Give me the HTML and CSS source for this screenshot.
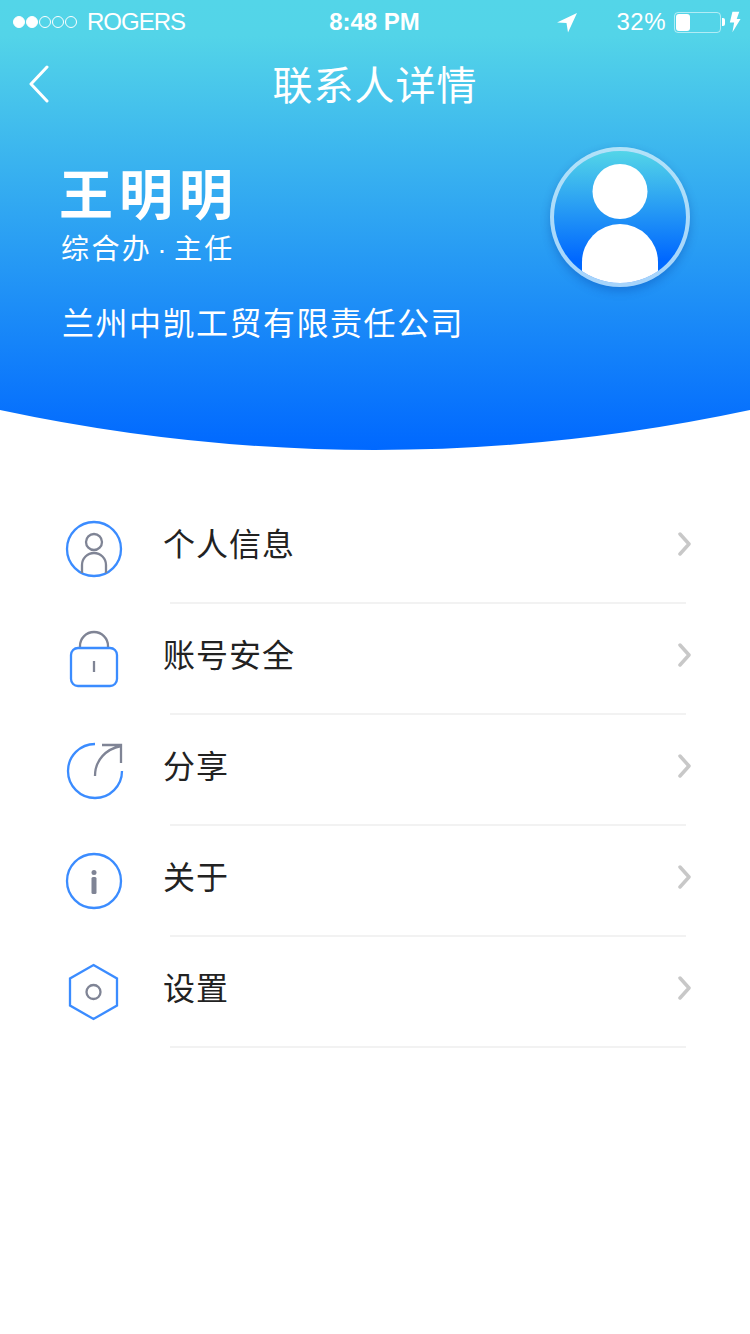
FILE: index.html
```html
<!DOCTYPE html>
<html lang="zh-CN">
<head>
  <meta charset="UTF-8">
  <meta name="viewport" content="width=device-width, initial-scale=1.0">
  <title>联系人详情</title>
  <link rel="stylesheet" href="styles.css">
</head>
<body>
  <header class="hero">
    <div class="status-bar">
      <div class="status-left">
        <span class="signal">
          <i class="dot on"></i><i class="dot on"></i><i class="dot"></i><i class="dot"></i><i class="dot"></i>
        </span>
        <span class="carrier">ROGERS</span>
      </div>
      <span class="clock">8:48 PM</span>
      <div class="status-right">
        <svg class="locate" width="22" height="22" viewBox="0 0 22 22"><path d="M21 2 1 11.500 10.500 12 12 21.500Z" fill="#fff"/></svg>
        <span class="percent">32%</span>
        <span class="battery"><span class="battery-level"></span></span>
        <svg class="bolt" width="12" height="24" viewBox="0 0 14 24"><path d="M4 0h8L9 8.500h4.500L4 24l2-11.500H1Z" fill="#fff"/></svg>
      </div>
    </div>

    <nav class="nav-bar">
      <svg class="back" width="22" height="38" viewBox="0 0 22 38"><path d="M19 2 3 19l16 17" fill="none" stroke="#fff" stroke-width="3" stroke-linecap="round" stroke-linejoin="round"/></svg>
      <h1 class="nav-title">联系人详情</h1>
    </nav>

    <div class="profile">
      <div class="profile-text">
        <h2 class="name">王明明</h2>
        <p class="role">综合办<span class="role-dot">·</span>主任</p>
        <p class="company">兰州中凯工贸有限责任公司</p>
      </div>
      <div class="avatar">
        <svg width="132" height="132" viewBox="0 0 132 132">
          <circle cx="66" cy="40.500" r="27.500" fill="#fff"/>
          <path d="M28 140V111a38 38 0 0 1 76 0v29Z" fill="#fff"/>
        </svg>
      </div>
    </div>
  </header>

  <ul class="menu">
    <li class="menu-item">
      <svg class="menu-icon" width="60" height="60" viewBox="0 0 60 60">
        <circle cx="30" cy="30" r="27" class="line-blue"/>
        <circle cx="30" cy="23" r="8" class="line-grey"/>
        <path d="M18 54V46a12 12 0 0 1 24 0v8" class="line-grey"/>
      </svg>
      <span class="menu-label">个人信息</span>
      <svg class="chevron" width="13" height="24" viewBox="0 0 13 24"><path d="M2 2l9 10-9 10" class="line-chevron"/></svg>
    </li>
    <li class="menu-item">
      <svg class="menu-icon" width="60" height="60" viewBox="0 0 60 60">
        <path d="M16 19v-3a14 14 0 0 1 28 0v3" class="line-grey"/>
        <rect x="7" y="18" width="46" height="38" rx="7" class="line-blue"/>
        <path d="M30 31v11" class="line-grey"/>
      </svg>
      <span class="menu-label">账号安全</span>
      <svg class="chevron" width="13" height="24" viewBox="0 0 13 24"><path d="M2 2l9 10-9 10" class="line-chevron"/></svg>
    </li>
    <li class="menu-item">
      <svg class="menu-icon" width="60" height="60" viewBox="0 0 60 60">
        <path d="M31 3A27 27 0 1 0 58 30" class="line-blue"/>
        <path d="M38 4h19v18M57 5C42 8 31 19 31 35" class="line-grey"/>
      </svg>
      <span class="menu-label">分享</span>
      <svg class="chevron" width="13" height="24" viewBox="0 0 13 24"><path d="M2 2l9 10-9 10" class="line-chevron"/></svg>
    </li>
    <li class="menu-item">
      <svg class="menu-icon" width="60" height="60" viewBox="0 0 60 60">
        <circle cx="30" cy="29" r="27" class="line-blue"/>
        <circle cx="30" cy="20.500" r="2.500" fill="#7f8495"/>
        <rect x="27.500" y="25" width="5" height="17" rx="1.500" fill="#7f8495"/>
      </svg>
      <span class="menu-label">关于</span>
      <svg class="chevron" width="13" height="24" viewBox="0 0 13 24"><path d="M2 2l9 10-9 10" class="line-chevron"/></svg>
    </li>
    <li class="menu-item">
      <svg class="menu-icon" width="60" height="60" viewBox="0 0 60 60">
        <path d="M29.500 2 53 15.500v27L29.500 56 6 42.500v-27Z" class="line-blue"/>
        <circle cx="29.500" cy="29" r="7" class="line-grey"/>
      </svg>
      <span class="menu-label">设置</span>
      <svg class="chevron" width="13" height="24" viewBox="0 0 13 24"><path d="M2 2l9 10-9 10" class="line-chevron"/></svg>
    </li>
  </ul>
</body>
</html>
```

FILE: styles.css
```css
body {
  margin: 0;
  background: #fff;
  font-family: "Noto Sans CJK SC", "Liberation Sans", sans-serif;
}
h1, h2, p, ul {
  margin: 0;
  padding: 0;
}

/* blue top part, the curve is cut out of the bottom */
.hero {
  height: 450px;
  color: #fff;
  background: linear-gradient(180deg, #53d5e8 0%, #53d4e8 8%, #0068ff 100%);
  clip-path: path("M0 0H750V410Q375 490 0 410Z");
}

.status-bar {
  display: grid;
  grid-template-columns: 1fr auto 1fr;
  align-items: center;
  height: 44px;
  padding: 0 9px 0 13px;
  font-family: "Liberation Sans", sans-serif;
  font-size: 24px;
}
.status-left {
  display: flex;
  align-items: center;
}
.signal {
  display: flex;
  gap: 1px;
  margin-right: 10px;
}
.dot {
  box-sizing: border-box;
  width: 12px;
  height: 12px;
  border: 1px solid #fff;
  border-radius: 50%;
}
.dot.on {
  background: #fff;
}
.carrier {
  letter-spacing: -1px;
}
.clock {
  margin-right: 5px;
  font-weight: bold;
}
.status-right {
  display: flex;
  align-items: center;
  justify-content: flex-end;
}
.locate {
  margin-right: 38px;
}
.percent {
  margin-right: 8px;
  letter-spacing: 0.500px;
}
.battery {
  position: relative;
  box-sizing: border-box;
  width: 47px;
  height: 21px;
  padding: 1px;
  margin-right: 8px;
  border: 1px solid rgba(255, 255, 255, 0.55);
  border-radius: 4px;
}
.battery::after {
  content: "";
  position: absolute;
  right: -5px;
  top: 5px;
  width: 3px;
  height: 8px;
  background: #fff;
  border-radius: 0 2px 2px 0;
}
.battery-level {
  display: block;
  width: 14px;
  height: 100%;
  background: #fff;
  border-radius: 3px;
}

.nav-bar {
  position: relative;
  height: 82px;
  padding-bottom: 4px;
  box-sizing: border-box;
  display: flex;
  align-items: center;
  justify-content: center;
}
.back {
  position: absolute;
  left: 28px;
  top: 21px;
}
.nav-title {
  font-size: 40px;
  font-weight: 400;
  letter-spacing: 1px;
}

.profile {
  display: flex;
  justify-content: space-between;
  padding: 21px 60px 0 60px;
}
.profile-text {
  padding-top: 13px;
}
.name {
  margin-left: -1px;
  font-size: 54px;
  font-weight: 700;
  line-height: 64px;
  letter-spacing: 6px;
}
.role {
  margin-top: 5px;
  padding-left: 1px;
  font-size: 28px;
  line-height: 36px;
  letter-spacing: 2.400px;
}
.role-dot {
  margin: 0 5px;
  font-family: "Liberation Sans", sans-serif;
}
.company {
  margin-top: 30px;
  padding-left: 2px;
  font-size: 32px;
  line-height: 46px;
  letter-spacing: 1.500px;
}
.avatar {
  box-sizing: border-box;
  width: 140px;
  height: 140px;
  overflow: hidden;
  border: 4px solid rgba(255, 255, 255, 0.6);
  border-radius: 50%;
  background: linear-gradient(180deg, #53d5e8 0%, #0068ff 82%) padding-box;
  box-shadow: 0 4px 10px rgba(0, 50, 150, 0.3);
}
.avatar svg {
  display: block;
}

/* list */
.menu {
  list-style: none;
  margin-top: 43px;
}
.menu-item {
  position: relative;
  height: 111px;
  display: flex;
  align-items: center;
  padding-left: 64px;
  padding-right: 59px;
}
.menu-item::after {
  content: "";
  position: absolute;
  left: 170px;
  right: 64px;
  bottom: 0;
  height: 2px;
  background: #f2f2f2;
}
.menu-icon {
  flex: none;
}
.menu-label {
  flex: 1;
  margin-left: 39px;
  margin-bottom: 14px;
  font-size: 32px;
  letter-spacing: 1px;
  color: #222;
}
.chevron {
  flex: none;
  margin-bottom: 10px;
}
.line-blue {
  fill: none;
  stroke: #3b8cff;
  stroke-width: 2.300;
}
.line-grey {
  fill: none;
  stroke: #7f8495;
  stroke-width: 2.300;
}
.line-chevron {
  fill: none;
  stroke: #c8c8c8;
  stroke-width: 3.500;
  stroke-linecap: round;
  stroke-linejoin: round;
}
```
